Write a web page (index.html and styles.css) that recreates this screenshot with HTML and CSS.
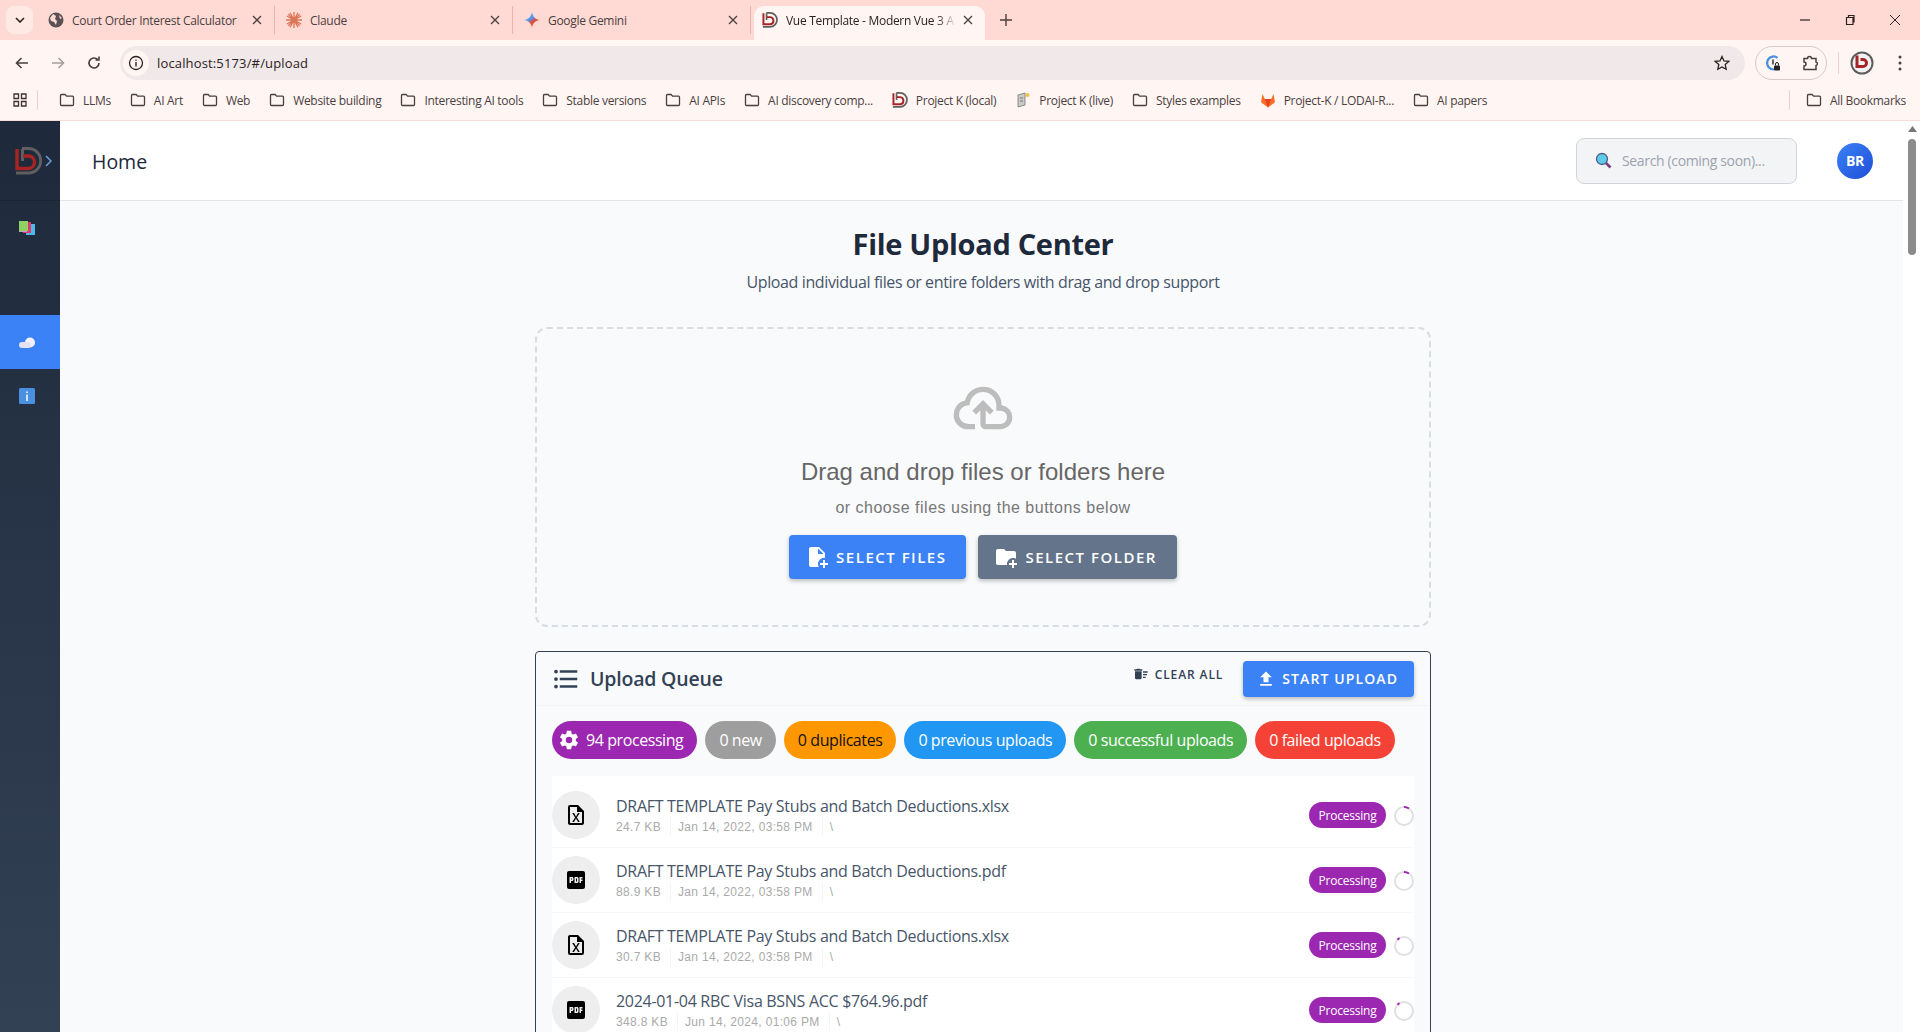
FILE: index.html
```html
<!DOCTYPE html>
<html lang="en">
<head>
  <meta charset="UTF-8" />
  <meta name="viewport" content="width=device-width, initial-scale=1.0"/>
  <title>Vue Template - Modern Vue 3 App</title>
  <link rel="stylesheet" href="styles.css">
</head>
<body>
  <svg class="defs" width="0" height="0" aria-hidden="true">
    <symbol id="i-logo" viewBox="0 0 27 28">
      <path d="M7 1.5H13.5A12.2 12.2 0 0 1 13.5 26H1" fill="none" stroke="#5f5f5f" stroke-width="3"/>
      <path d="M7.5 2V14" fill="none" stroke="#5f5f5f" stroke-width="3"/>
      <path d="M2 2V21.5H14A6.3 6.3 0 0 0 14 9H8" fill="none" stroke="#a82424" stroke-width="3.4"/>
    </symbol>
    <symbol id="i-folder" viewBox="0 0 16 16">
      <path d="M1.5 3.5a1 1 0 0 1 1-1h3.6l1.5 1.6h5.9a1 1 0 0 1 1 1v7.4a1 1 0 0 1-1 1h-11a1 1 0 0 1-1-1z" fill="none" stroke="#4a3f3f" stroke-width="1.3"/>
    </symbol>
    <symbol id="i-close" viewBox="0 0 10 10">
      <path d="M1 1L9 9M9 1L1 9" fill="none" stroke="#4a3f3f" stroke-width="1.3"/>
    </symbol>
    <symbol id="i-excel" viewBox="0 0 24 24">
      <path d="M14 2H6C4.89 2 4 2.9 4 4V20C4 21.11 4.89 22 6 22H18C19.11 22 20 21.11 20 20V8L14 2M18 20H6V4H13V9H18V20M12.9 14.5L15.8 19H14L12 15.6L10 19H8.2L11.1 14.5L8.2 10H10L12 13.4L14 10H15.8L12.9 14.5Z"/>
    </symbol>
    <symbol id="i-pdf" viewBox="0 0 24 24">
      <path d="M19 3H5C3.9 3 3 3.9 3 5V19C3 20.1 3.9 21 5 21H19C20.1 21 21 20.1 21 19V5C21 3.9 20.1 3 19 3M9.5 11.5C9.5 12.3 8.8 13 8 13H7V15H5.5V9H8C8.8 9 9.5 9.7 9.5 10.5V11.5M14.5 13.5C14.5 14.3 13.8 15 13 15H10.5V9H13C13.8 9 14.5 9.7 14.5 10.5V13.5M18.5 10.5H17V11.5H18.5V13H17V15H15.5V9H18.5V10.5M12 10.5H13V13.5H12V10.5M7 10.5H8V11.5H7V10.5Z"/>
    </symbol>
    <symbol id="i-spin" viewBox="0 0 20 20">
      <circle cx="10" cy="10" r="9" fill="none" stroke="#e0e0e0" stroke-width="2"/>
    </symbol>
  </svg>

  <header class="browser">
    <div class="tabstrip">
      <button class="tab-menu"><svg width="10" height="6" viewBox="0 0 10 6"><path d="M1 1l4 4 4-4" fill="none" stroke="#2c2222" stroke-width="1.6"/></svg></button>
      <div class="tab tab-first">
        <svg class="favicon" viewBox="0 0 16 16"><circle cx="8" cy="8" r="7.5" fill="#5a5252"/><path d="M5 2l3 2-1 3 2 2-1 4-2-3-3-1-1-3zM11 3l3 3-2 1z" fill="#ffd9d3"/></svg>
        <span class="tab-title">Court Order Interest Calculator</span>
        <svg class="tab-close"><use href="#i-close"/></svg>
      </div>
      <div class="tab">
        <svg class="favicon" viewBox="0 0 16 16"><path d="M8 0v16M0 8h16M2.3 2.3l11.4 11.4M13.7 2.3L2.3 13.7M4 .8l8 14.4M12 .8L4 15.2M.8 4l14.4 8M.8 12l14.4-8" stroke="#d97757" stroke-width="1.3"/></svg>
        <span class="tab-title">Claude</span>
        <svg class="tab-close"><use href="#i-close"/></svg>
      </div>
      <div class="tab">
        <svg class="favicon" viewBox="0 0 16 16">
          <defs><linearGradient id="gem" x1="0" y1="0" x2="0.7" y2="1"><stop offset="0" stop-color="#4285f4"/><stop offset=".45" stop-color="#4a9cf0"/><stop offset=".7" stop-color="#ea4335"/><stop offset="1" stop-color="#fbbc05"/></linearGradient></defs>
          <path d="M8 0C8.6 4.6 11.4 7.4 16 8 11.4 8.6 8.6 11.4 8 16 7.4 11.4 4.6 8.6 0 8 4.6 7.4 7.4 4.6 8 0Z" fill="url(#gem)"/>
        </svg>
        <span class="tab-title">Google Gemini</span>
        <svg class="tab-close"><use href="#i-close"/></svg>
      </div>
      <div class="tab tab-active">
        <svg class="favicon favicon-logo"><use href="#i-logo"/></svg>
        <span class="tab-title">Vue Template - Modern Vue 3 A</span>
        <svg class="tab-close"><use href="#i-close"/></svg>
      </div>
      <svg class="tab-new" width="12" height="12" viewBox="0 0 12 12"><path d="M6 0v12M0 6h12" stroke="#4a3f3f" stroke-width="1.4"/></svg>
      <div class="win-controls">
        <svg width="12" height="12" viewBox="0 0 12 12"><path d="M1 6h10" stroke="#2c2222" stroke-width="1.2"/></svg>
        <svg width="12" height="12" viewBox="0 0 12 12"><path d="M2.5 3.5h6.5v7h-6.500zM4.500 3.500v-2h5.500v6.500h-1" fill="none" stroke="#2c2222" stroke-width="1.200"/></svg>
        <svg width="12" height="12" viewBox="0 0 12 12"><path d="M1 1l10 10M11 1L1 11" stroke="#2c2222" stroke-width="1"/></svg>
      </div>
    </div>

    <div class="toolbar">
      <svg class="nav-btn" viewBox="0 0 16 16"><path d="M14 8H3M7.500 3L2.500 8l5 5" fill="none" stroke="#4a3f3f" stroke-width="1.600"/></svg>
      <svg class="nav-btn" viewBox="0 0 16 16"><path d="M2 8h11M8.500 3l5 5-5 5" fill="none" stroke="#a89c9c" stroke-width="1.600"/></svg>
      <svg class="nav-btn" viewBox="0 0 16 16"><path d="M13 8a5 5 0 1 1-1.500-3.600M13 1.500v3.500H9.500" fill="none" stroke="#4a3f3f" stroke-width="1.600"/></svg>
      <div class="omnibox">
        <span class="site-info"><svg width="16" height="16" viewBox="0 0 16 16"><circle cx="8" cy="8" r="6.500" fill="none" stroke="#2c2222" stroke-width="1.300"/><path d="M8 7v4.500M8 4.500v1.300" stroke="#2c2222" stroke-width="1.400"/></svg></span>
        <span class="url">localhost:5173/#/upload</span>
        <svg class="star" width="16" height="16" viewBox="0 0 16 16"><path d="M8 1.500l2 4.400 4.800.5-3.600 3.200 1 4.700L8 11.900l-4.200 2.400 1-4.700L1.200 6.400 6 5.900z" fill="none" stroke="#2c2222" stroke-width="1.300"/></svg>
      </div>
      <div class="ext-pill">
        <svg width="18" height="18" viewBox="0 0 18 18"><path d="M13.500 3.800A6.500 6.500 0 1 0 10 15.500" fill="none" stroke="#4a90e2" stroke-width="2.200"/><path d="M9 5.500v5" stroke="#333" stroke-width="1.500"/><rect x="10" y="11.500" width="6" height="5" rx="1" fill="#222"/><path d="M11.500 11.500V10a1.500 1.500 0 0 1 3 0v1.500" fill="none" stroke="#222"/></svg>
        <svg width="18" height="18" viewBox="0 0 18 18"><path d="M3 4.500h3.500a2 2 0 0 1 4 0H15v3.500a1.800 1.800 0 0 1 0 3.500V15.500H3v-3.500a2 2 0 0 0 0-4z" fill="none" stroke="#4a3f3f" stroke-width="1.500"/></svg>
      </div>
      <span class="tool-sep"></span>
      <svg class="profile" width="24" height="24" viewBox="0 0 24 24"><circle cx="12" cy="12" r="11.500" fill="#5c5c5c"/><circle cx="12" cy="12" r="9.500" fill="#f3f3f3"/><path d="M7 4.500v11h6a3.500 3.500 0 0 0 0-7h-2.500" fill="none" stroke="#a82424" stroke-width="3"/></svg>
      <svg class="kebab" width="4" height="16" viewBox="0 0 4 16"><circle cx="2" cy="2" r="1.500" fill="#4a3f3f"/><circle cx="2" cy="8" r="1.500" fill="#4a3f3f"/><circle cx="2" cy="14" r="1.500" fill="#4a3f3f"/></svg>
    </div>

    <nav class="bookmarks">
      <svg class="apps" width="14" height="14" viewBox="0 0 14 14"><path d="M1 1h4.500v4.500H1zM8.500 1H13v4.500H8.500zM1 8.500h4.500V13H1zM8.500 8.500H13V13H8.500z" fill="none" stroke="#3c3232" stroke-width="1.300"/></svg>
      <span class="bm-sep"></span>
      <a class="bm"><svg class="bm-icon"><use href="#i-folder"/></svg>LLMs</a>
      <a class="bm"><svg class="bm-icon"><use href="#i-folder"/></svg>AI Art</a>
      <a class="bm"><svg class="bm-icon"><use href="#i-folder"/></svg>Web</a>
      <a class="bm"><svg class="bm-icon"><use href="#i-folder"/></svg>Website building</a>
      <a class="bm"><svg class="bm-icon"><use href="#i-folder"/></svg>Interesting AI tools</a>
      <a class="bm"><svg class="bm-icon"><use href="#i-folder"/></svg>Stable versions</a>
      <a class="bm"><svg class="bm-icon"><use href="#i-folder"/></svg>AI APIs</a>
      <a class="bm"><svg class="bm-icon"><use href="#i-folder"/></svg>AI discovery comp...</a>
      <a class="bm"><svg class="bm-icon bm-logo"><use href="#i-logo"/></svg>Project K (local)</a>
      <a class="bm"><svg class="bm-icon" viewBox="0 0 16 16"><path d="M3 3l7-2v12l-7 2z" fill="#c9c9c9" stroke="#777" stroke-width=".8"/><path d="M5 6h3M5 9h3" stroke="#777"/><circle cx="12.500" cy="3" r="2" fill="#f0c040"/></svg>Project K (live)</a>
      <a class="bm"><svg class="bm-icon"><use href="#i-folder"/></svg>Styles examples</a>
      <a class="bm"><svg class="bm-icon" viewBox="0 0 16 16"><path d="M8 15.500L1 10.200 2.500 2l2.300 5h6.400l2.300-5L15 10.200z" fill="#fc6d26"/><path d="M8 15.500L4.800 7h6.400z" fill="#e24329"/></svg>Project-K / LODAI-R...</a>
      <a class="bm"><svg class="bm-icon"><use href="#i-folder"/></svg>AI papers</a>
      <span class="bm-spacer"></span>
      <span class="bm-sep"></span>
      <a class="bm bm-all"><svg class="bm-icon"><use href="#i-folder"/></svg>All Bookmarks</a>
    </nav>
  </header>

  <div class="app">
    <aside class="sidebar">
      <div class="side-head">
        <svg class="side-logo"><use href="#i-logo"/></svg>
        <svg class="side-chevron" width="7" height="12" viewBox="0 0 7 12"><path d="M1 1l5 5-5 5" fill="none" stroke="#6d9fd8" stroke-width="1.500"/></svg>
      </div>
      <div class="side-item side-books">
        <svg width="16" height="14" viewBox="0 0 16 14"><rect x="7" y="3" width="9" height="11" fill="#4db8ea"/><rect x="4" y="1" width="8" height="11" fill="#e23a6e"/><rect x="0" y="0" width="9" height="10" fill="#8fd163"/><rect x="0" y="10" width="8" height="1" fill="#b9a6c9"/></svg>
      </div>
      <div class="side-item side-active">
        <svg width="16" height="11" viewBox="0 0 16 11"><circle cx="11" cy="5.500" r="5" fill="#f4f2fb"/><rect x="0" y="5" width="12" height="6" rx="3" fill="#e6e2f3"/></svg>
      </div>
      <div class="side-item">
        <svg width="16" height="16" viewBox="0 0 16 16"><rect width="16" height="16" rx="1.500" fill="#4a90e2"/><path d="M8 6.500V13M8 3.500v1.500" stroke="#fff" stroke-width="1.500"/></svg>
      </div>
    </aside>

    <div class="main">
      <div class="topbar">
        <h2 class="page-name">Home</h2>
        <div class="search">
          <svg width="17" height="17" viewBox="0 0 17 17"><path d="M10.500 10.500L15.500 15.500" stroke="#7a3f7f" stroke-width="2.600"/><circle cx="7" cy="7" r="5.500" fill="#5ecbe8" stroke="#4d5a8a" stroke-width="1.300"/></svg>
          <span>Search (coming soon)...</span>
        </div>
        <div class="avatar">BR</div>
      </div>

      <main class="content">
        <h1 class="title">File Upload Center</h1>
        <p class="subtitle">Upload individual files or entire folders with drag and drop support</p>

        <section class="dropzone">
          <svg class="cloud" viewBox="0 0 24 24"><path d="M6.500 20Q4.220 20 2.610 18.430 1 16.850 1 14.580 1 12.630 2.170 11.100 3.350 9.570 5.250 9.150 5.880 6.850 7.750 5.430 9.630 4 12 4 14.930 4 16.960 6.040 19 8.070 19 11 20.730 11.200 21.860 12.500 23 13.780 23 15.500 23 17.380 21.690 18.690 20.380 20 18.500 20H13Q12.180 20 11.590 19.410 11 18.830 11 18V12.850L9.400 14.400L8 13L12 9L16 13L14.600 14.400L13 12.850V18H18.500Q19.550 18 20.270 17.270 21 16.550 21 15.500 21 14.450 20.270 13.730 19.550 13 18.500 13H17V11Q17 8.930 15.540 7.460 14.070 6 12 6 9.930 6 8.460 7.460 7 8.930 7 11H6.500Q5.050 11 4.030 12.030 3 13.050 3 14.500 3 15.950 4.030 17 5.050 18 6.500 18H9V20M12 13Z"/></svg>
          <h3 class="drop-title">Drag and drop files or folders here</h3>
          <p class="drop-sub">or choose files using the buttons below</p>
          <div class="drop-actions">
            <button class="btn btn-blue"><svg class="btn-icon" viewBox="0 0 24 24"><path d="M14 2H6C4.900 2 4 2.900 4 4V20C4 21.100 4.900 22 6 22H13.810C13.280 21.090 13 20.050 13 19C13 15.690 15.690 13 19 13C19.340 13 19.670 13.030 20 13.080V8L14 2M13 9V3.500L18.500 9H13M18 15V18H15V20H18V23H20V20H23V18H20V15H18Z"/></svg>Select Files</button>
            <button class="btn btn-slate"><svg class="btn-icon" viewBox="0 0 24 24"><path d="M13 19C13 19.340 13.040 19.670 13.090 20H4C2.900 20 2 19.110 2 18V6C2 4.890 2.890 4 4 4H10L12 6H20C21.100 6 22 6.890 22 8V13.810C21.390 13.460 20.720 13.220 20 13.090C19.670 13.040 19.340 13 19 13C15.690 13 13 15.690 13 19M20 18V15H18V18H15V20H18V23H20V20H23V18H20Z"/></svg>Select Folder</button>
          </div>
        </section>

        <section class="queue">
          <div class="queue-head">
            <svg class="queue-icon" viewBox="0 0 24 24"><path d="M7,5H21V7H7V5M7,13V11H21V13H7M4,4.500A1.500,1.500 0 0,1 5.500,6A1.500,1.500 0 0,1 4,7.500A1.500,1.500 0 0,1 2.500,6A1.500,1.500 0 0,1 4,4.500M4,10.500A1.500,1.500 0 0,1 5.500,12A1.500,1.500 0 0,1 4,13.500A1.500,1.500 0 0,1 2.500,12A1.500,1.500 0 0,1 4,10.500M7,19V17H21V19H7M4,16.500A1.500,1.500 0 0,1 5.500,18A1.500,1.500 0 0,1 4,19.500A1.500,1.500 0 0,1 2.500,18A1.500,1.500 0 0,1 4,16.500Z"/></svg>
            <h3 class="queue-title">Upload Queue</h3>
            <button class="clear-all"><svg viewBox="0 0 24 24"><path d="M15,16H19V18H15V16M15,8H22V10H15V8M15,12H21V14H15V12M3,18A2,2 0 0,0 5,20H11A2,2 0 0,0 13,18V8H3V18M14,5H11L10,4H6L5,5H2V7H14V5Z"/></svg>Clear All</button>
            <button class="btn btn-blue btn-start"><svg class="btn-icon" viewBox="0 0 24 24"><path d="M9,16V10H5L12,3L19,10H15V16H9M5,20V18H19V20H5Z"/></svg>Start Upload</button>
          </div>

          <div class="chips">
            <span class="chip chip-purple"><svg viewBox="0 0 24 24"><path d="M12,15.500A3.500,3.500 0 0,1 8.500,12A3.500,3.500 0 0,1 12,8.500A3.500,3.500 0 0,1 15.500,12A3.500,3.500 0 0,1 12,15.500M19.430,12.970C19.470,12.650 19.500,12.330 19.500,12C19.500,11.670 19.470,11.340 19.430,11L21.540,9.370C21.730,9.220 21.780,8.950 21.660,8.730L19.660,5.270C19.540,5.050 19.270,4.960 19.050,5.050L16.560,6.050C16.040,5.660 15.500,5.320 14.870,5.070L14.500,2.420C14.460,2.180 14.250,2 14,2H10C9.750,2 9.540,2.180 9.500,2.420L9.130,5.070C8.500,5.320 7.960,5.660 7.440,6.050L4.950,5.050C4.730,4.960 4.460,5.050 4.340,5.270L2.340,8.730C2.210,8.950 2.270,9.220 2.460,9.370L4.570,11C4.530,11.340 4.500,11.670 4.500,12C4.500,12.330 4.530,12.650 4.570,12.970L2.460,14.630C2.270,14.780 2.210,15.050 2.340,15.270L4.340,18.730C4.460,18.950 4.730,19.030 4.950,18.950L7.440,17.940C7.960,18.340 8.500,18.680 9.130,18.930L9.500,21.580C9.540,21.820 9.750,22 10,22H14C14.250,22 14.460,21.820 14.500,21.580L14.870,18.930C15.500,18.670 16.040,18.340 16.560,17.940L19.050,18.950C19.270,19.030 19.540,18.950 19.660,18.730L21.660,15.270C21.780,15.050 21.730,14.780 21.540,14.630L19.430,12.970Z"/></svg>94 processing</span>
            <span class="chip chip-grey">0 new</span>
            <span class="chip chip-orange">0 duplicates</span>
            <span class="chip chip-blue">0 previous uploads</span>
            <span class="chip chip-green">0 successful uploads</span>
            <span class="chip chip-red">0 failed uploads</span>
          </div>

          <ul class="file-list">
            <li class="file">
              <span class="file-icon"><svg><use href="#i-excel"/></svg></span>
              <div class="file-info">
                <div class="file-name">DRAFT TEMPLATE Pay Stubs and Batch Deductions.xlsx</div>
                <div class="file-meta"><span>24.7 KB</span><span>Jan 14, 2022, 03:58 PM</span><span>\</span></div>
              </div>
              <span class="badge">Processing</span>
              <svg class="spinner" viewBox="0 0 20 20"><use href="#i-spin"/><path d="M10 1a9 9 0 0 1 5 1.500"/></svg>
            </li>
            <li class="file">
              <span class="file-icon"><svg><use href="#i-pdf"/></svg></span>
              <div class="file-info">
                <div class="file-name">DRAFT TEMPLATE Pay Stubs and Batch Deductions.pdf</div>
                <div class="file-meta"><span>88.9 KB</span><span>Jan 14, 2022, 03:58 PM</span><span>\</span></div>
              </div>
              <span class="badge">Processing</span>
              <svg class="spinner" viewBox="0 0 20 20"><use href="#i-spin"/><path d="M10 1a9 9 0 0 1 5 1.500"/></svg>
            </li>
            <li class="file">
              <span class="file-icon"><svg><use href="#i-excel"/></svg></span>
              <div class="file-info">
                <div class="file-name">DRAFT TEMPLATE Pay Stubs and Batch Deductions.xlsx</div>
                <div class="file-meta"><span>30.7 KB</span><span>Jan 14, 2022, 03:58 PM</span><span>\</span></div>
              </div>
              <span class="badge">Processing</span>
              <svg class="spinner" viewBox="0 0 20 20"><use href="#i-spin"/><path d="M3.500 3.700a9 9 0 0 1 2-1.500"/></svg>
            </li>
            <li class="file">
              <span class="file-icon"><svg><use href="#i-pdf"/></svg></span>
              <div class="file-info">
                <div class="file-name">2024-01-04 RBC Visa BSNS ACC $764.96.pdf</div>
                <div class="file-meta"><span>348.8 KB</span><span>Jun 14, 2024, 01:06 PM</span><span>\</span></div>
              </div>
              <span class="badge">Processing</span>
              <svg class="spinner" viewBox="0 0 20 20"><use href="#i-spin"/><path d="M3.500 3.700a9 9 0 0 1 2-1.500"/></svg>
            </li>
          </ul>
        </section>
      </main>

      <div class="scrollbar">
        <svg width="9" height="6" viewBox="0 0 9 6"><path d="M4.500 0L9 6H0z" fill="#777"/></svg>
        <span class="scroll-thumb"></span>
      </div>
    </div>
  </div>
</body>
</html>
```

FILE: styles.css
```css
* {
  box-sizing: border-box;
}

html, body {
  margin: 0;
  height: 100%;
  overflow: hidden;
}

body {
  display: flex;
  flex-direction: column;
  font-family: "Open Sans", "Noto Sans", sans-serif;
  color: #334155;
  background: #fff;
}

.defs {
  position: absolute;
}

button {
  font-family: inherit;
  border: none;
  cursor: pointer;
}

/* browser chrome */
.browser {
  flex: none;
  font-size: 12px;
  color: #4a3f3f;
  letter-spacing: -0.3px;
}

.tabstrip {
  display: flex;
  align-items: flex-end;
  height: 40px;
  padding-left: 6px;
  background: #ffd9d3;
}

.tab-menu {
  align-self: flex-start;
  display: flex;
  align-items: center;
  justify-content: center;
  width: 27px;
  height: 28px;
  margin-top: 6px;
  padding: 0;
  border-radius: 8px;
  background: #ffe9e5;
}

.tab {
  display: flex;
  align-items: center;
  width: 238px;
  height: 28px;
  margin-bottom: 6px;
  padding: 0 12px 0 11px;
  border-right: 1px solid #f0b5aa;
}

.tab-first {
  width: 242px;
  padding-left: 15px;
}

.tab .favicon {
  flex: none;
  width: 16px;
  height: 16px;
  margin-right: 8px;
}

.tab-title {
  flex: 1;
  overflow: hidden;
  white-space: nowrap;
}

.tab-close {
  flex: none;
  width: 10px;
  height: 10px;
  margin-left: 6px;
}

.tab-active {
  width: 231px;
  height: 34px;
  margin: 0 0 0 3px;
  padding: 0 12px 6px 8px;
  border: none;
  border-radius: 10px 10px 0 0;
  background: #fff5f3;
  color: #2c2222;
}

.tab-active .tab-title {
  -webkit-mask-image: linear-gradient(to right, #000 88%, transparent);
  mask-image: linear-gradient(to right, #000 88%, transparent);
}

.tab-new {
  align-self: center;
  margin: 0 0 0 15px;
}

.win-controls {
  align-self: center;
  display: flex;
  gap: 33px;
  margin-left: auto;
  padding-right: 19px;
}

.toolbar {
  display: flex;
  align-items: center;
  height: 44px;
  padding: 6px 0 4px 14px;
  background: #fff5f3;
}

.nav-btn {
  flex: none;
  width: 16px;
  height: 16px;
  margin-right: 20px;
}

.omnibox {
  flex: none;
  display: flex;
  align-items: center;
  width: 1625px;
  height: 34px;
  margin-left: -2px;
  padding: 0 15px 0 3px;
  border-radius: 17px;
  background: #f1e8e9;
}

.site-info {
  display: flex;
  align-items: center;
  justify-content: center;
  width: 26px;
  height: 26px;
  border-radius: 50%;
  background: #fff5f3;
}

.url {
  flex: 1;
  margin-left: 8px;
  font-size: 13px;
  letter-spacing: 0.15px;
  color: #2c2222;
}

.ext-pill {
  flex: none;
  display: flex;
  align-items: center;
  gap: 19px;
  height: 34px;
  margin-left: 10px;
  padding: 0 7px 0 8px;
  border: 1px solid #d9c9c9;
  border-radius: 17px;
}

.tool-sep {
  flex: none;
  width: 1px;
  height: 22px;
  margin: 0 11px 0 11px;
  background: #f5cfc8;
}

.kebab {
  flex: none;
  margin-left: 24px;
}

.bookmarks {
  display: flex;
  align-items: center;
  height: 37px;
  padding: 0 14px 4px 13px;
  background: #fff5f3;
  border-bottom: 1px solid #f6dcd7;
}

.apps {
  flex: none;
  margin-right: 10px;
}

.bm-sep {
  flex: none;
  width: 1px;
  height: 20px;
  background: #f5cfc8;
}

.bm-sep + .bm {
  margin-left: 16px;
}

.bm-sep:nth-child(2) + .bm {
  margin-left: 21px;
}

.bm {
  display: flex;
  align-items: center;
  margin-right: 19px;
  white-space: nowrap;
}

.bm-icon {
  flex: none;
  width: 16px;
  height: 16px;
  margin-right: 8px;
}

.bm-spacer {
  flex: 1;
}

.bm-all {
  margin-right: 0;
}

/* app shell */
.app {
  flex: 1;
  display: flex;
  min-height: 0;
}

.sidebar {
  flex: none;
  width: 60px;
  background: linear-gradient(to bottom, #1e293b, #334155);
}

.side-head {
  display: flex;
  align-items: center;
  height: 80px;
  padding-left: 15px;
  border-bottom: 1px solid #1a2433;
}

.side-logo {
  width: 27px;
  height: 28px;
}

.side-chevron {
  margin: 0 0 0 3px;
}

.side-item {
  display: flex;
  align-items: center;
  height: 54px;
  padding-left: 19px;
}

.side-books {
  margin-bottom: 60px;
}

.side-active {
  background: #3b82f6;
}

.main {
  flex: 1;
  display: flex;
  flex-wrap: wrap;
  min-width: 0;
  position: relative;
  overflow: hidden;
  background: #f9fafc;
}

.topbar {
  flex: none;
  display: flex;
  align-items: center;
  width: 1843px;
  height: 80px;
  padding: 0 30px 0 32px;
  background: #fff;
  border-bottom: 1px solid #e2e4e9;
}

.page-name {
  flex: 1;
  margin: 1px 0 0;
  font-size: 19.5px;
  font-weight: 500;
  color: #1e293b;
}

.search {
  display: flex;
  align-items: center;
  gap: 10px;
  width: 221px;
  height: 46px;
  padding-left: 18px;
  font-size: 14px;
  letter-spacing: -0.35px;
  color: #9ca3af;
  background: #f3f4f6;
  border: 1px solid #d1d5db;
  border-radius: 8px;
}

.avatar {
  display: flex;
  align-items: center;
  justify-content: center;
  width: 36px;
  height: 36px;
  margin-left: 40px;
  font-size: 14px;
  font-weight: 700;
  letter-spacing: -0.3px;
  color: #fff;
  border-radius: 50%;
  background: linear-gradient(135deg, #3b82f6, #1d4ed8);
}

.content {
  width: 1843px;
  padding: 24px 0 0 3px;
  text-align: center;
}

.title {
  margin: 0;
  font-size: 29px;
  line-height: 38px;
  font-weight: 700;
  color: #1e293b;
  letter-spacing: -0.3px;
}

.subtitle {
  margin: 7px 0 33px;
  font-size: 16px;
  line-height: 24px;
  letter-spacing: -0.38px;
  color: #475569;
}

.dropzone {
  width: 896px;
  height: 300px;
  margin: 0 auto 24px;
  padding-top: 47px;
  background: #f9fafc;
  border: 2px dashed #d8dce3;
  border-radius: 12px;
}

.cloud {
  display: block;
  width: 64px;
  height: 64px;
  margin: 0 auto;
  fill: #bdbdbd;
}

.drop-title {
  margin: 16px 0 0;
  font-family: "Liberation Sans", Arial, sans-serif;
  font-size: 24px;
  line-height: 32px;
  font-weight: 400;
  color: #666;
}

.drop-sub {
  margin: 8px 0 0;
  font-family: "Liberation Sans", Arial, sans-serif;
  font-size: 16px;
  line-height: 24px;
  letter-spacing: 0.5px;
  color: #777;
}

.drop-actions {
  display: flex;
  justify-content: center;
  gap: 12px;
  margin-top: 15px;
}

.btn {
  display: inline-flex;
  align-items: center;
  height: 44px;
  padding: 0 20px 0 16px;
  font-size: 15px;
  font-weight: 600;
  letter-spacing: 1.5px;
  text-transform: uppercase;
  color: #fff;
  border-radius: 4px;
  box-shadow: 0 2px 4px rgba(0, 0, 0, 0.25);
}

.btn-blue {
  background: #3b82f6;
}

.btn-slate {
  background: #64748b;
}

.btn-icon {
  flex: none;
  width: 24px;
  height: 24px;
  margin-right: 7px;
  fill: #fff;
}

/* upload queue */
.queue {
  width: 896px;
  margin: 0 auto;
  padding-bottom: 16px;
  text-align: left;
  background: #f9fafc;
  border: 1px solid #334155;
  border-radius: 4px;
}

.queue-head {
  display: flex;
  align-items: center;
  height: 54px;
  padding: 0 16px 0 15px;
  border-bottom: 1px solid #f2f3f5;
}

.queue-icon {
  flex: none;
  width: 30px;
  height: 30px;
  margin-right: 9px;
  fill: #334155;
}

.queue-title {
  flex: 1;
  margin: 0;
  font-size: 19.5px;
  font-weight: 600;
  letter-spacing: -0.2px;
  color: #334155;
}

.clear-all {
  display: flex;
  align-items: center;
  align-self: flex-start;
  height: 16px;
  margin: 14px 20px 0 0;
  padding: 0;
  font-size: 12px;
  font-weight: 600;
  letter-spacing: 0.9px;
  text-transform: uppercase;
  color: #334155;
  background: none;
}

.clear-all svg {
  width: 16px;
  height: 16px;
  margin-right: 6px;
  fill: #334155;
}

.btn-start {
  height: 36px;
  padding: 0 16px 0 13px;
  font-size: 14px;
  letter-spacing: 1.1px;
}

.btn-start .btn-icon {
  width: 20px;
  height: 20px;
  margin-right: 6px;
}

.chips {
  display: flex;
  gap: 8px;
  padding: 15px 16px 17px;
}

.chip {
  display: inline-flex;
  align-items: center;
  height: 38px;
  padding: 0 14px;
  font-size: 16px;
  letter-spacing: -0.42px;
  color: #fff;
  border-radius: 19px;
}

.chip svg {
  width: 22px;
  height: 22px;
  margin: 0 6px 0 -6px;
  fill: #fff;
}

.chip-purple { background: #9c27b0; padding-left: 12px; }
.chip-grey { background: #9e9e9e; }
.chip-orange { background: #ff9800; color: #111; }
.chip-blue { background: #2196f3; }
.chip-green { background: #4caf50; }
.chip-red { background: #f44336; }

.file-list {
  list-style: none;
  margin: 0 16px;
  padding: 0;
  background: #fff;
}

.file {
  display: flex;
  align-items: center;
  height: 65px;
  border-bottom: 1px solid #f7f7f8;
}

.file:first-child {
  height: 72px;
  padding-top: 7px;
}

.file-icon {
  flex: none;
  display: flex;
  align-items: center;
  justify-content: center;
  width: 48px;
  height: 48px;
  margin-right: 16px;
  border-radius: 50%;
  background: #eee;
}

.file-icon svg {
  width: 24px;
  height: 24px;
  fill: #000;
}

.file-info {
  flex: 1;
  min-width: 0;
}

.file-name {
  font-size: 16px;
  line-height: 23px;
  letter-spacing: -0.3px;
  color: #475569;
}

.file-meta {
  display: flex;
  font-family: "Liberation Sans", Arial, sans-serif;
  font-size: 12px;
  line-height: 18px;
  letter-spacing: 0.33px;
  color: #aaa;
}

.file-meta span {
  padding-right: 9px;
  margin-right: 7px;
  border-right: 1px solid #f4f4f4;
}

.file-meta span:last-child {
  border-right: none;
}

.badge {
  flex: none;
  display: flex;
  align-items: center;
  justify-content: center;
  width: 77px;
  height: 26px;
  margin-right: 8px;
  font-size: 12px;
  letter-spacing: -0.2px;
  color: #fff;
  border-radius: 13px;
  background: #9c27b0;
}

.spinner {
  flex: none;
  width: 20px;
  height: 20px;
  margin-top: 2px;
}

.spinner path {
  fill: none;
  stroke: #9c27b0;
  stroke-width: 2;
}

.scrollbar {
  position: absolute;
  top: 0;
  right: 0;
  display: flex;
  flex-direction: column;
  align-items: center;
  width: 17px;
  height: 100%;
  padding: 5px 0 0 1px;
  background: #fff;
}

.scroll-thumb {
  width: 8px;
  height: 116px;
  margin-top: 7px;
  border-radius: 4px;
  background: #8c8c8c;
}
```
